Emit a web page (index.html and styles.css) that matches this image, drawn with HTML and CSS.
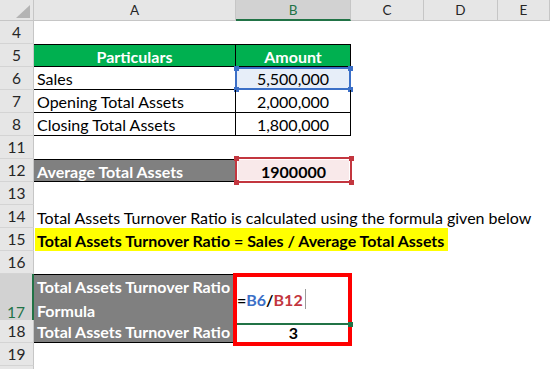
FILE: index.html
```html
<!DOCTYPE html>
<html>
<head>
<meta charset="utf-8">
<link rel="stylesheet" href="styles.css">
</head>
<body>
<div class="sheet">
  <div class="row colhead">
    <div class="corner"><svg width="33" height="20" viewBox="0 0 33 20"><polygon points="30,5 30,18 16,18" fill="#b4b4b4"/></svg></div>
    <div class="ch">A</div>
    <div class="ch sel">B</div>
    <div class="ch">C</div>
    <div class="ch">D</div>
    <div class="ch">E</div>
  </div>

  <div class="row"><div class="rh">4</div><div class="c"></div><div class="c"></div><div class="c"></div><div class="c"></div><div class="c"></div></div>

  <div class="row"><div class="rh">5</div>
    <div class="c t top hdr">Particulars</div><div class="c t top hdr">Amount</div><div class="c"></div><div class="c"></div><div class="c"></div></div>

  <div class="row"><div class="rh">6</div>
    <div class="c t">Sales</div>
    <div class="c t num blue-fill">5,500,000<span class="ref ref-blue"><i class="h tl"></i><i class="h tr"></i><i class="h bl"></i><i class="h br"></i></span></div>
    <div class="c"></div><div class="c"></div><div class="c"></div></div>

  <div class="row"><div class="rh">7</div>
    <div class="c t">Opening Total Assets</div><div class="c t num">2,000,000</div><div class="c"></div><div class="c"></div><div class="c"></div></div>

  <div class="row"><div class="rh">8</div>
    <div class="c t">Closing Total Assets</div><div class="c t num">1,800,000</div><div class="c"></div><div class="c"></div><div class="c"></div></div>

  <div class="row"><div class="rh">11</div><div class="c"></div><div class="c"></div><div class="c"></div><div class="c"></div><div class="c"></div></div>

  <div class="row"><div class="rh">12</div>
    <div class="c gray top bot">Average Total Assets</div>
    <div class="c num bold pink-fill">1900000<span class="ref ref-red"><i class="h tl"></i><i class="h tr"></i><i class="h bl"></i><i class="h br"></i></span></div>
    <div class="c"></div><div class="c"></div><div class="c"></div></div>

  <div class="row"><div class="rh">13</div><div class="c"></div><div class="c"></div><div class="c"></div><div class="c"></div><div class="c"></div></div>

  <div class="row"><div class="rh">14</div>
    <div class="c note">Total Assets Turnover Ratio is calculated using the formula given below</div><div class="c"></div><div class="c"></div><div class="c"></div><div class="c"></div></div>

  <div class="row"><div class="rh">15</div>
    <div class="c hl-cell"><span class="hl">Total Assets Turnover Ratio = Sales / Average Total Assets</span></div><div class="c"></div><div class="c"></div><div class="c"></div><div class="c"></div></div>

  <div class="row"><div class="rh">16</div><div class="c"></div><div class="c"></div><div class="c"></div><div class="c"></div><div class="c"></div></div>

  <div class="row tall"><div class="rh sel">17</div>
    <div class="c gray top bot wrap">Total Assets Turnover Ratio Formula</div>
    <div class="c formula"><span class="eq">=</span><span class="fb">B6</span><span class="eq">/</span><span class="fr">B12</span><span class="caret"></span>
      <span class="active-line"></span><span class="fill-handle"></span><span class="redbox"></span></div>
    <div class="c"></div><div class="c"></div><div class="c"></div></div>

  <div class="row"><div class="rh">18</div>
    <div class="c gray bot">Total Assets Turnover Ratio</div><div class="c num bold">3</div><div class="c"></div><div class="c"></div><div class="c"></div></div>

  <div class="row"><div class="rh">19</div><div class="c"></div><div class="c"></div><div class="c"></div><div class="c"></div><div class="c"></div></div>

  <div class="row"><div class="rh"></div><div class="c"></div><div class="c"></div><div class="c"></div><div class="c"></div><div class="c"></div></div>
</div>
</body>
</html>
```

FILE: styles.css
```css
html, body {
  margin: 0;
  padding: 0;
  background: #fff;
}
body {
  font-family: Lato, "Liberation Sans", sans-serif;
  font-size: 16px;
  color: #000;
}
.sheet {
  width: 550px;
  height: 369px;
  overflow: hidden;
}
.row {
  display: grid;
  grid-template-columns: 34px 202px 115px 73px 74px 52px;
  height: 23px;
}
.row.colhead {
  height: 21px;
}
.row.tall {
  height: 46px;
}
.corner, .ch, .rh {
  background: #e6e6e6;
  box-sizing: border-box;
}
.corner {
  border-right: 1px solid #c6c6c6;
  border-bottom: 1px solid #c6c6c6;
  display: flex;
}
.ch {
  border-right: 1px solid #c6c6c6;
  border-bottom: 1px solid #c6c6c6;
  display: flex;
  align-items: center;
  justify-content: center;
  font-size: 13.5px;
  color: #262626;
}
.ch.sel {
  background: #d2d2d2;
  border-bottom: 2px solid #217346;
  color: #217346;
}
.rh {
  border-right: 1px solid #c6c6c6;
  border-bottom: 1px solid #d4d4d4;
  display: flex;
  align-items: center;
  justify-content: center;
  font-size: 15.5px;
  color: #262626;
}
.rh.sel {
  background: #d2d2d2;
  border-right: 2px solid #217346;
  color: #217346;
  align-items: flex-end;
  padding-bottom: 2px;
}
.c {
  box-sizing: border-box;
  display: flex;
  align-items: center;
  padding: 1px 3px 0;
  white-space: nowrap;
  position: relative;
  min-width: 0;
}
.t {
  border-right: 1px solid #000;
  border-bottom: 1px solid #000;
}
.top {
  border-top: 1px solid #000;
}
.bot {
  border-bottom: 1px solid #000;
}
.hdr {
  background: #00b050;
  color: #fff;
  font-weight: 700;
  justify-content: center;
}
.num {
  justify-content: center;
}
.bold {
  font-weight: 700;
}
.blue-fill {
  background: #e7eef9;
}
.pink-fill {
  background: #f9e9ea;
}
.gray {
  background: #808080;
  color: #fff;
  font-weight: 700;
}
.wrap {
  white-space: normal;
  align-items: flex-end;
  line-height: 24px;
  padding: 0 0 0 3px;
}
.hl-cell {
  padding: 0 0 0 1px;
  align-items: stretch;
}
.hl {
  background: #ffff00;
  font-weight: 700;
  padding: 1px 4px 0 2px;
  display: flex;
  align-items: center;
}
.ref {
  position: absolute;
  left: -1px;
  top: 0;
  right: -1px;
  bottom: -1px;
  border: 2px solid;
  box-shadow: inset 0 0 0 1px #fff;
}
.ref-blue {
  border-color: #3b6fc7;
  color: #3b6fc7;
  box-shadow: none;
}
.ref-red {
  top: -2px;
  border-color: #c3363f;
  color: #c3363f;
}
.h {
  position: absolute;
  width: 5px;
  height: 5px;
  background: currentColor;
}
.h.tl { left: -3.5px; top: -3.5px; }
.h.tr { right: -3.5px; top: -3.5px; }
.h.bl { left: -3.5px; bottom: -3.5px; }
.h.br { right: -3.5px; bottom: -3.5px; }
.formula {
  font-weight: 700;
  padding-left: 1px;
  padding-top: 0;
}
.eq { color: #000; }
.fb { color: #3b6fc7; }
.fr { color: #c3363f; }
.caret {
  display: inline-block;
  width: 1px;
  height: 20px;
  background: #9a9a9a;
  margin-left: 2px;
}
.active-line {
  position: absolute;
  left: 1px;
  right: 1px;
  bottom: -1px;
  height: 2px;
  background: #217346;
}
.fill-handle {
  position: absolute;
  right: -2px;
  bottom: -3px;
  width: 5px;
  height: 5px;
  background: #217346;
  z-index: 3;
}
.redbox {
  position: absolute;
  left: -3px;
  top: -1px;
  width: 119px;
  height: 73px;
  box-sizing: border-box;
  border: 4px solid #ff0000;
  z-index: 2;
}
```
